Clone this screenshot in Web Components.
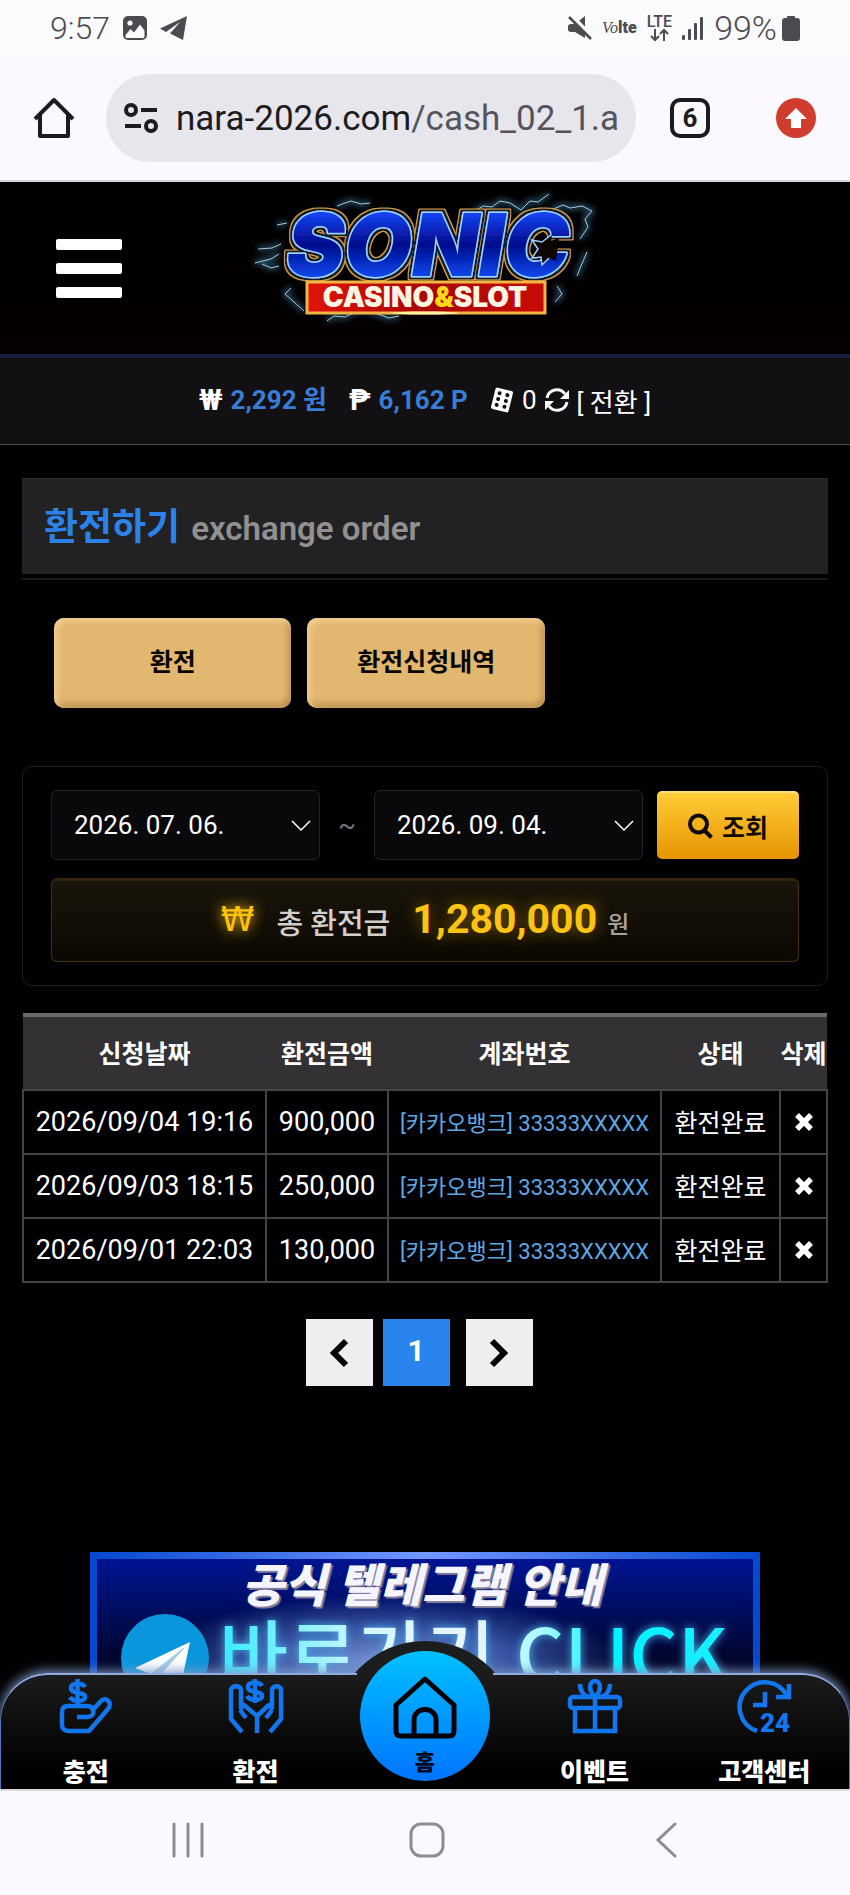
<!DOCTYPE html>
<html lang="ko">
<head>
<meta charset="utf-8">
<meta name="viewport" content="width=device-width, initial-scale=1">
<title>환전하기</title>
<style>
  html, body {
    margin: 0;
    height: 100%;
    background: #010002;
  }
  body {
    font-family: Roboto, "Noto Sans CJK KR", sans-serif;
    font-size: 26px;
    color: #fff;
  }
</style>
</head>
<body>
<phone-screen>
  <status-bar slot="top"></status-bar>
  <browser-bar slot="top" host="nara-2026.com" path="/cash_02_1.a" tabs="6"></browser-bar>

  <site-header></site-header>
  <balance-bar cash="2,292" point="6,162" coupon="0"></balance-bar>
  <page-title>환전하기<span slot="sub">exchange order</span></page-title>
  <tab-buttons>
    <gold-button>환전</gold-button>
    <gold-button>환전신청내역</gold-button>
  </tab-buttons>
  <search-panel from="2026. 07. 06." to="2026. 09. 04." total="1,280,000"></search-panel>
  <history-table></history-table>
  <page-nav current="1"></page-nav>
  <telegram-banner></telegram-banner>

  <bottom-menu slot="dock"></bottom-menu>
  <system-nav slot="bottom"></system-nav>
</phone-screen>

<script>
  // 공통 베이스: template() 내용을 shadow root 에 넣는다
  class BaseElement extends HTMLElement {
    constructor() {
      super();
      this.attachShadow({ mode: 'open' });
    }

    connectedCallback() {
      this.shadowRoot.innerHTML = `
        <style>
          *, *::before, *::after { box-sizing: border-box; }
          :host { display: block; box-sizing: border-box; }
          svg { display: block; flex: none; overflow: visible; }
          button { font: inherit; color: inherit; border: 0; padding: 0; margin: 0; background: none; cursor: pointer; }
          a { color: inherit; text-decoration: none; }
        </style>
        ${this.template()}
      `;
    }

    template() {
      return '<slot></slot>';
    }
  }

  // 전체 화면 틀
  class PhoneScreen extends BaseElement {
    template() {
      return `
        <style>
          :host { display: flex; flex-direction: column; height: 100vh; overflow: hidden; }
          .view { position: relative; flex: 1; min-height: 0; overflow: hidden; background: #010002; }
          .dock { position: absolute; left: 0; right: 0; bottom: 0; }
        </style>
        <slot name="top"></slot>
        <div class="view">
          <slot></slot>
          <div class="dock"><slot name="dock"></slot></div>
        </div>
        <slot name="bottom"></slot>
      `;
    }
  }
  customElements.define('phone-screen', PhoneScreen);

  class StatusBar extends BaseElement {
    template() {
      return `
        <style>
          :host {
            display: flex; align-items: center; justify-content: space-between;
            height: 56px; padding: 0 50px; background: #fbfafc; color: #4d4b50;
            font-size: 32px; font-weight: 300;
          }
          .group { display: flex; align-items: center; gap: 12px; }
          .right { gap: 10px; }
          .volte { display: flex; align-items: baseline; font-size: 16px; font-weight: 900; line-height: 16px; }
          .volte i { font-family: "Liberation Serif", serif; font-weight: 400; }
          .lte { display: flex; flex-direction: column; align-items: center; font-size: 16px; font-weight: 500; line-height: 14px; }
          .pct { display: flex; align-items: center; gap: 5px; font-size: 34px; }
        </style>
        <div class="group">
          <span>9:57</span>
          <svg width="26" height="26" viewBox="0 0 26 26">
            <rect x="1" y="1" width="24" height="24" rx="5" fill="#4d4b50"/>
            <circle cx="8" cy="8" r="2.6" fill="#fbfafc"/>
            <path d="M3.500 20l5-6 3.500 3.500 6-8 4.500 6v6a1.500 1.500 0 0 1-1.500 1.500h-16a1.500 1.500 0 0 1-1.500-1.500z" fill="#fbfafc"/>
          </svg>
          <svg width="28" height="26" viewBox="0 0 28 26">
            <path d="M27 1L0 13.500l6 3.500L20 7 10 18.500 23 25z" fill="#4d4b50"/>
          </svg>
        </div>
        <div class="group right">
          <svg width="24" height="24" viewBox="0 0 24 24" fill="#4d4b50">
            <path d="M17 0v22L7 16H3a3 3 0 0 1-3-3v-2a3 3 0 0 1 3-3h4z"/>
            <path d="M4 0l20 21" stroke="#fbfafc" stroke-width="4"/>
            <path d="M1 1l22 22" stroke="#4d4b50" stroke-width="2.600"/>
          </svg>
          <span class="volte"><i>Vo</i>lte</span>
          <span class="lte">LTE
            <svg width="19" height="12" viewBox="0 0 19 12" fill="none" stroke="#4d4b50" stroke-width="2">
              <path d="M5 0v11M1 7l4 4 4-4M14 12V1M10 5l4-4 4 4"/>
            </svg>
          </span>
          <svg width="22" height="23" viewBox="0 0 22 23" fill="#4d4b50">
            <rect x="0" y="18" width="3" height="5" rx="1"/><rect x="6" y="12" width="3" height="11" rx="1"/>
            <rect x="12" y="6" width="3" height="17" rx="1"/><rect x="18" y="0" width="3" height="23" rx="1"/>
          </svg>
          <span class="pct">99%
            <svg width="18" height="25" viewBox="0 0 18 25" fill="#4d4b50">
              <path d="M6 0h6a1 1 0 0 1 1 1v1h2a3 3 0 0 1 3 3v17a3 3 0 0 1-3 3H3a3 3 0 0 1-3-3V5a3 3 0 0 1 3-3h2V1a1 1 0 0 1 1-1z"/>
            </svg>
          </span>
        </div>
      `;
    }
  }
  customElements.define('status-bar', StatusBar);

  class BrowserBar extends BaseElement {
    template() {
      return `
        <style>
          :host {
            display: flex; align-items: center; height: 126px; padding: 0 34px 0 32px;
            background: #fbf9fe; border-bottom: 2px solid #d3d4d8; color: #1c1b20;
          }
          .url {
            display: flex; align-items: center; flex: 1; gap: 18px; height: 88px; margin: 0 34px 0 30px;
            padding: 0 16px 0 18px; border-radius: 44px; background: #e6e6ec;
            font-size: 35px; white-space: nowrap; overflow: hidden;
          }
          .path { color: #55545a; }
          .tabs {
            width: 40px; height: 40px; border: 4px solid #1c1b20; border-radius: 10px;
            font-size: 26px; font-weight: 700; line-height: 32px; text-align: center;
          }
          .update { margin-left: 66px; }
        </style>
        <button aria-label="홈">
          <svg width="44" height="44" viewBox="0 0 44 44" fill="none" stroke="#1c1b20" stroke-width="4" stroke-linejoin="round">
            <path d="M3 23L22 4l19 19M8 19v21h28V19"/>
          </svg>
        </button>
        <div class="url">
          <svg width="34" height="30" viewBox="0 0 34 30" fill="none" stroke="#1c1b20" stroke-width="4">
            <circle cx="7" cy="7" r="5"/><path d="M17 7h16M1 23h16"/><circle cx="27" cy="23" r="5"/>
          </svg>
          <span>${this.getAttribute('host')}<span class="path">${this.getAttribute('path')}</span></span>
        </div>
        <button class="tabs">${this.getAttribute('tabs')}</button>
        <button class="update" aria-label="업데이트">
          <svg width="40" height="40" viewBox="0 0 40 40">
            <circle cx="20" cy="20" r="20" fill="#d03c2e"/>
            <path d="M20 10l11 11h-6v9H15v-9H9z" fill="#fff"/>
          </svg>
        </button>
      `;
    }
  }
  customElements.define('browser-bar', BrowserBar);

  class SiteHeader extends BaseElement {
    template() {
      return `
        <style>
          :host {
            display: grid; grid-template-columns: 1fr auto 1fr; align-items: center;
            height: 176px; padding: 0 56px; border-bottom: 4px solid #17203f;
            background: linear-gradient(#000, #050002);
          }
          .menu { display: flex; flex-direction: column; gap: 13px; width: 66px; }
          .menu i { height: 11px; border-radius: 2px; background: #fff; }
          .logo { margin-bottom: 20px; }
        </style>
        <button class="menu" aria-label="메뉴"><i></i><i></i><i></i></button>
        <a class="logo" href="#">
          <svg width="344" height="132" viewBox="0 0 344 132">
            <defs>
              <linearGradient id="blue" x1="0" y1="0" x2="0" y2="1">
                <stop offset=".2" stop-color="#1443f4"/><stop offset=".5" stop-color="#020b8c"/><stop offset=".8" stop-color="#0a46ea"/>
              </linearGradient>
              <linearGradient id="red"><stop offset="0" stop-color="#e01408"/><stop offset=".5" stop-color="#a80505"/><stop offset="1" stop-color="#c80c06"/></linearGradient>
              <filter id="glow" x="-20%" y="-20%" width="140%" height="140%"><feGaussianBlur stdDeviation="3"/></filter>
              <!-- 글자 바깥 남색 + 금색 테두리 -->
              <filter id="rim" x="-10%" y="-20%" width="120%" height="140%">
                <feMorphology in="SourceAlpha" operator="dilate" radius="2" result="a"/>
                <feMorphology in="SourceAlpha" operator="dilate" radius="3" result="b"/>
                <feFlood flood-color="#0b1a33"/><feComposite in2="a" operator="in" result="navy"/>
                <feFlood flood-color="#d69b3c"/><feComposite in2="b" operator="in" result="gold"/>
                <feMerge><feMergeNode in="gold"/><feMergeNode in="navy"/><feMergeNode in="SourceGraphic"/></feMerge>
              </filter>
              <g id="bolts" fill="none" stroke-linejoin="round">
                <path d="M220 20l10-6 9 1 8-6 10 2 11 7 9-9 8 1 11-8M298 18l12-5 7 3 12-2 10 5-7 8 3 8-8 12"/>
                <path d="M84 14l8-3 6-2 10 3 9-1M34 31l-10 2M28 52l-9 4-14 1M26 62l-8 5-16 4M26 74l-8 2-9-4"/>
                <path d="M38 96l-6 6 9 8 10 9M74 129l7-5 11 1 10-5 8-3 12 4 14 5 10-2M334 60l-6 14-4 10M304 94l5 8-7 8"/>
              </g>
            </defs>
            <use href="#bolts" stroke="#3f7fa8" stroke-width="3" filter="url(#glow)"/>
            <use href="#bolts" stroke="#a9c8d4" stroke-width="1"/>
            <text x="175" y="84" fill="url(#blue)" stroke="#9fd2ff" stroke-width="3" paint-order="stroke" stroke-linejoin="round" filter="url(#rim)"
              font-family="Inter, Roboto, sans-serif" font-weight="900" font-style="italic" font-size="87" text-anchor="middle">SONIC</text>
            <path d="M306 46l-8 3 1-6-10 7-10-2 6 9-6 9 9-1 1 8 7-7 7 3z" fill="#0c0500"/>
            <path d="M298 43l-9 7-10-2 6 9-6 9 9-1 1 8 7-7" fill="none" stroke="#9fd2ff" stroke-width="1.500"/>
            <rect x="54" y="90" width="238" height="31" fill="url(#red)" stroke="#f0b545" stroke-width="3"/>
            <text x="172" y="115" text-anchor="middle" font-family="Inter, Roboto, sans-serif" font-weight="900" font-size="28" fill="#fff4e2">CASINO<tspan fill="#ffd91a">&amp;</tspan>SLOT</text>
            <ellipse cx="172" cy="121" rx="34" ry="1.500" fill="#fff0a0"/>
          </svg>
        </a>
      `;
    }
  }
  customElements.define('site-header', SiteHeader);

  class BalanceBar extends BaseElement {
    template() {
      return `
        <style>
          :host {
            display: flex; align-items: center; justify-content: center; gap: 8px;
            height: 87px; padding-bottom: 3px; background: #121013; border-bottom: 1px solid #4a4a4c;
            line-height: 32px; white-space: nowrap;
          }
          b { font-size: 29px; font-weight: 700; }
          .num { color: #387ed6; font-weight: 700; margin-right: 14px; }
          a { font-size: 26px; padding-top: 6px; }
        </style>
        <b>₩</b><span class="num">${this.getAttribute('cash')} 원</span>
        <b>₱</b><span class="num">${this.getAttribute('point')} P</span>
        <svg width="24" height="24" viewBox="0 0 24 24">
          <g transform="rotate(14 12 12)">
            <rect x="3" y="1" width="18" height="22" rx="2" fill="#fff"/>
            <g fill="#121013"><circle cx="8" cy="6" r="2"/><circle cx="8" cy="12" r="2"/><circle cx="8" cy="18" r="2"/>
            <circle cx="16" cy="6" r="2"/><circle cx="16" cy="12" r="2"/><circle cx="16" cy="18" r="2"/></g>
          </g>
        </svg>
        <span>${this.getAttribute('coupon')}</span>
        <svg width="24" height="24" viewBox="0 0 24 24" fill="none" stroke="#fff" stroke-width="3">
          <path d="M2 10a10 10 0 0 1 18-4M22 14a10 10 0 0 1-18 4"/>
          <path d="M24 2v9h-9zM0 22v-9h9z" fill="#fff" stroke="none"/>
        </svg>
        <a href="#">[ 전환 ]</a>
      `;
    }
  }
  customElements.define('balance-bar', BalanceBar);

  class PageTitle extends BaseElement {
    template() {
      return `
        <style>
          :host { margin: 33px 22px 0; padding-bottom: 4px; border-bottom: 2px solid #1b1b1c; }
          h1 {
            display: flex; align-items: baseline; gap: 11px; height: 96px; margin: 0; padding: 0 22px;
            background: #222123; border-top: 1px solid #2e2e2e;
            font-size: 37px; line-height: 98px; font-weight: 700; color: #2b83ea;
          }
          small { font-size: 33px; font-weight: 600; color: #929192; }
        </style>
        <h1><slot></slot><small><slot name="sub"></slot></small></h1>
      `;
    }
  }
  customElements.define('page-title', PageTitle);

  class TabButtons extends BaseElement {
    template() {
      return `
        <style>
          :host { display: flex; gap: 16px; margin: 38px 54px 0; }
        </style>
        <slot></slot>
      `;
    }
  }
  customElements.define('tab-buttons', TabButtons);

  class GoldButton extends BaseElement {
    template() {
      return `
        <style>
          :host { width: 32%; }
          button {
            width: 100%; height: 90px; padding-bottom: 6px; border-radius: 10px; background: #e2b76f;
            box-shadow: inset 3px 3px 6px #f3cf95, inset -3px -4px 6px #b88f50;
            font-size: 25px; font-weight: 700; color: #0a0500;
          }
        </style>
        <button><slot></slot></button>
      `;
    }
  }
  customElements.define('gold-button', GoldButton);

  class SearchPanel extends BaseElement {
    template() {
      return `
        <style>
          :host { margin: 58px 22px 0; padding: 23px 28px; border: 1px solid #1d1c1f; border-radius: 10px; }
          form { display: flex; align-items: center; gap: 14px; }
          .range { display: flex; align-items: center; flex: 1; }
          .range > span { flex: none; width: 54px; text-align: center; color: #77767a; }
          label { position: relative; flex: 1; }
          label svg { position: absolute; right: 9px; top: 30px; pointer-events: none; }
          select {
            appearance: none; display: block; width: 100%; height: 70px; padding: 0 22px; border: 1px solid #232226;
            border-radius: 6px; background: #09080b; color: #fff; font: inherit;
          }
          .go {
            display: flex; align-items: center; justify-content: center; gap: 9px; width: 142px; height: 68px;
            border-radius: 5px; background: linear-gradient(#ffcd38, #e59400); border-top: 2px solid #ffdf7c;
            font-size: 25px; font-weight: 700; color: #120c00;
          }
          .total {
            display: flex; align-items: center; justify-content: center; gap: 22px; height: 84px; margin-top: 18px;
            border: 1px solid #46320c; border-top: 3px solid #32230a; border-radius: 6px;
            background: linear-gradient(#1a150a, #0b0802); white-space: nowrap;
          }
          .won { font-family: "DejaVu Sans", sans-serif; font-size: 34px; line-height: 44px; padding-bottom: 4px; color: #fcc010; text-shadow: 0 0 14px #fcc010; }
          .cap { font-size: 29px; font-weight: 500; color: #d2cfca; }
          strong { font-size: 41px; font-weight: 700; color: #fdc312; text-shadow: 0 0 16px #8a6600; padding-bottom: 4px; }
          .unit { font-size: 24px; font-weight: 500; color: #a7a199; margin-left: -12px; padding-top: 2px; }
        </style>
        <form onsubmit="return false">
          <div class="range">
            <label><select aria-label="시작일"><option>${this.getAttribute('from')}</option></select>${this.arrow()}</label>
            <span>~</span>
            <label><select aria-label="종료일"><option>${this.getAttribute('to')}</option></select>${this.arrow()}</label>
          </div>
          <button class="go">
            <svg width="25" height="26" viewBox="0 0 25 26" fill="none" stroke="#120c00" stroke-width="4">
              <circle cx="10.500" cy="11" r="8.500"/><path d="M16.500 17.500l7 7"/>
            </svg>조회
          </button>
        </form>
        <div class="total">
          <span class="won">₩</span>
          <span class="cap">총 환전금</span>
          <strong>${this.getAttribute('total')}</strong>
          <span class="unit">원</span>
        </div>
      `;
    }

    arrow() {
      return `
        <svg width="20" height="12" viewBox="0 0 20 12" fill="none" stroke="#fff" stroke-width="1.500">
          <path d="M1 1l9 9 9-9"/>
        </svg>`;
    }
  }
  customElements.define('search-panel', SearchPanel);

  class HistoryTable extends BaseElement {
    template() {
      const rows = [
        ['2026/09/04 19:16', '900,000', '33333XXXXX'],
        ['2026/09/03 18:15', '250,000', '33333XXXXX'],
        ['2026/09/01 22:03', '130,000', '33333XXXXX'],
      ];
      return `
        <style>
          :host { margin: 27px 22px 0; }
          table { width: 100%; border-collapse: collapse; table-layout: fixed; text-align: center; white-space: nowrap; font-size: 27px; line-height: 32px; }
          .c-date { width: 243px; }
          .c-money { width: 122px; }
          .c-state { width: 119px; }
          .c-del { width: 47px; }
          th, td { padding: 0; }
          th { height: 75px; padding-top: 4px; border-top: 4px solid #69686b; background: #333134; font-size: 25px; font-weight: 700; }
          td { height: 64px; border: 2px solid #444347; }
          .bank { padding-top: 4px; font-size: 22px; color: #60a7e2; }
          .state { padding-top: 4px; font-size: 25px; }
          td svg { margin: 0 auto; }
          button { display: block; width: 100%; }
        </style>
        <table>
          <colgroup><col class="c-date"><col class="c-money"><col><col class="c-state"><col class="c-del"></colgroup>
          <thead><tr><th>신청날짜</th><th>환전금액</th><th>계좌번호</th><th>상태</th><th>삭제</th></tr></thead>
          <tbody>
            ${rows.map(([date, money, account]) => `
              <tr>
                <td>${date}</td>
                <td>${money}</td>
                <td class="bank">[카카오뱅크] ${account}</td>
                <td class="state">환전완료</td>
                <td><button aria-label="삭제">
                  <svg width="18" height="18" viewBox="0 0 18 18" stroke="#fff" stroke-width="5.500"><path d="M2 2l14 14M16 2L2 16"/></svg>
                </button></td>
              </tr>`).join('')}
          </tbody>
        </table>
      `;
    }
  }
  customElements.define('history-table', HistoryTable);

  class PageNav extends BaseElement {
    template() {
      return `
        <style>
          :host { display: flex; justify-content: center; gap: 10px; margin-top: 36px; padding-right: 12px; }
          button {
            display: flex; align-items: center; justify-content: center; width: 67px; height: 67px;
            background: #efedf0; color: #fff; font-size: 30px; font-weight: 700;
          }
          .on { background: #2a84ee; margin-right: 6px; padding-bottom: 4px; }
        </style>
        <button aria-label="이전">
          <svg width="22" height="28" viewBox="0 0 22 28" fill="none" stroke="#050505" stroke-width="6"><path d="M18 2L6 14l12 12"/></svg>
        </button>
        <button class="on">${this.getAttribute('current')}</button>
        <button aria-label="다음">
          <svg width="22" height="28" viewBox="0 0 22 28" fill="none" stroke="#050505" stroke-width="6"><path d="M4 2l12 12L4 26"/></svg>
        </button>
      `;
    }
  }
  customElements.define('page-nav', PageNav);

  class TelegramBanner extends BaseElement {
    template() {
      return `
        <style>
          :host { margin: 166px 90px 0; }
          a {
            display: block; height: 190px; border: 7px solid; border-image: linear-gradient(90deg, #0649d0, #7397ff 50%, #0649d0) 1;
            text-align: center; white-space: nowrap; overflow: hidden;
            background: radial-gradient(ellipse 240px 70px at 44% 60%, #7f97d8, #34509f 55%, transparent), linear-gradient(#001493, #000424 62%);
          }
          .head { padding-right: 6px; font-size: 46px; line-height: 55px; font-weight: 900; font-style: italic; color: #f6f5ff; text-shadow: 2px 2px 1px #88849a; }
          .line { display: flex; align-items: flex-start; gap: 10px; padding-left: 24px; }
          .go {
            font-family: "Noto Sans CJK KR", sans-serif; font-size: 75px; line-height: 74px; font-weight: 500; color: transparent;
            background: linear-gradient(90deg, #35eaff, #d5f8ff 30%, #eaf4ff 50%, #a8faff 64%, #00f3ff 76%, #19efff);
            background-clip: text; -webkit-background-clip: text; filter: drop-shadow(0 0 5px #4cb5f0);
          }
        </style>
        <a href="#">
          <div class="head">공식 텔레그램 안내</div>
          <div class="line">
            <svg width="88" height="88" viewBox="0 0 88 88">
              <circle cx="44" cy="44" r="44" fill="#0a96dc"/>
              <path d="M69 28L14 54l16 6 34-27-27 30 22 12z" fill="#fff"/>
              <path d="M30 60l34-27-27 30-1 12z" fill="#a9cdea"/>
            </svg>
            <span class="go">바로가기 CLICK</span>
          </div>
        </a>
      `;
    }
  }
  customElements.define('telegram-banner', TelegramBanner);

  // 하단 메뉴. 가운데 홈 버튼은 메뉴 위로 솟아 있다
  class BottomMenu extends BaseElement {
    template() {
      return `
        <style>
          :host { position: relative; height: 116px; }
          .hump {
            position: absolute; left: 50%; bottom: -38px; width: 186px; height: 186px; border-radius: 50%;
            transform: translateX(-50%); background: #1c1d1d;
          }
          .clip { position: absolute; left: 0; right: 0; top: -50px; bottom: 0; overflow: hidden; }
          nav {
            position: relative; display: grid; grid-template-columns: repeat(5, 1fr); height: 100%;
            border: 1px solid #5578b8; border-top: 2px solid #8fabe0; border-bottom: 0; border-radius: 48px 48px 0 0;
            background: linear-gradient(#1c1b1c, #000 85%);
          }
          .glow { position: absolute; inset: 0; border-radius: 48px 48px 0 0; box-shadow: 0 -2px 12px #7f98c8; }
          a { display: flex; flex-direction: column; align-items: center; padding-top: 4px; gap: 22px; font-size: 25px; font-weight: 900; line-height: 36px; }
          .home { position: relative; color: #020a20; padding: 0; }
          .ball {
            position: absolute; left: 50%; top: -24px; width: 130px; height: 130px; border-radius: 50%; transform: translateX(-50%);
            display: flex; flex-direction: column; align-items: center; gap: 8px; padding-top: 24px;
            background: linear-gradient(#00c0ff, #0074ff); line-height: 32px; font-size: 22px;
          }
          .cut { position: absolute; left: 50%; top: -3px; width: 136px; height: 6px; margin-left: -68px; background: #1c1c1c; }
        </style>
        <div class="glow"></div>
        <div class="clip"><div class="hump"></div></div>
        <nav>
          <a href="#">
            <svg width="54" height="54" viewBox="0 0 54 54" fill="none" stroke="#1277ee" stroke-width="4.500" stroke-linejoin="round">
              <path d="M26 8c-2-4-14-5-14 1 0 7 14 3 14 9 0 5-12 5-15 0M18.500 0v26"/>
              <path d="M18 38h9c7 0 9-4 6-9-1-2-3-2-6-2H9c-4 0-6 2-6 6v13c0 4 3 6 7 6h20l19-22c5-6-2-13-7-8L33 32"/>
            </svg>
            충전
          </a>
          <a href="#">
            <svg width="54" height="54" viewBox="0 0 54 54" fill="none" stroke="#1277ee" stroke-width="4.500" stroke-linejoin="round">
              <path d="M34 7c-2-4-14-5-14 1 0 7 14 3 14 9 0 5-12 5-15 0M27 0v24"/>
              <path d="M29 54V37L16 26l-3 3V11c0-5-9-5-10 0v29l11 13M18 39l-6-8"/>
              <path d="M29 37l12-11 3 3V11c0-5 9-5 9 0v29L42 53M38 39l6-8"/>
            </svg>
            환전
          </a>
          <a href="#" class="home">
            <span class="cut"></span>
            <span class="ball">
              <svg width="64" height="64" viewBox="0 0 64 64" fill="none" stroke="#000" stroke-width="5" stroke-linejoin="round">
                <path d="M32 4L3 30v26c0 4 2 5 5 5h48c3 0 5-1 5-5V30z"/><path d="M21 61V45c0-14 22-14 22 0v16"/>
              </svg>
              홈
            </span>
          </a>
          <a href="#">
            <svg width="54" height="54" viewBox="0 0 54 54" fill="none" stroke="#1277ee" stroke-width="4.500">
              <rect x="2" y="18" width="50" height="11" rx="3"/><path d="M7 29v23h40V29M27 18v34"/>
              <path d="M27 18c-8-8-5-16 0-16s8 8 0 16zM23 18c-7 0-11-6-11-13M31 18c7 0 11-6 11-13"/>
            </svg>
            이벤트
          </a>
          <a href="#">
            <svg width="54" height="54" viewBox="0 0 54 54" fill="none" stroke="#1277ee" stroke-width="4.500">
              <path d="M20 52A25 25 0 1 1 50 17M52 5v13H39M28 13v13H16"/>
              <text x="23" y="53" font-family="Roboto, sans-serif" font-size="26" font-weight="900" fill="#1277ee" stroke="none">24</text>
            </svg>
            고객센터
          </a>
        </nav>
      `;
    }
  }
  customElements.define('bottom-menu', BottomMenu);

  class SystemNav extends BaseElement {
    template() {
      return `
        <style>
          :host {
            display: grid; grid-template-columns: repeat(3, 1fr); align-items: center; justify-items: center;
            height: 106px; padding: 0 64px 6px 68px; background: #fbf9fe; border-top: 2px solid #dddbe1;
          }
          svg { fill: none; stroke: #8e8c92; stroke-width: 3; stroke-linecap: round; }
        </style>
        <button aria-label="최근 앱"><svg width="34" height="36" viewBox="0 0 34 36"><path d="M3 2v32M17 2v32M31 2v32"/></svg></button>
        <button aria-label="홈"><svg width="36" height="36" viewBox="0 0 36 36"><rect x="2" y="2" width="32" height="32" rx="10"/></svg></button>
        <button aria-label="뒤로"><svg width="24" height="36" viewBox="0 0 24 36"><path d="M21 2L4 18l17 16"/></svg></button>
      `;
    }
  }
  customElements.define('system-nav', SystemNav);
</script>
</body>
</html>
